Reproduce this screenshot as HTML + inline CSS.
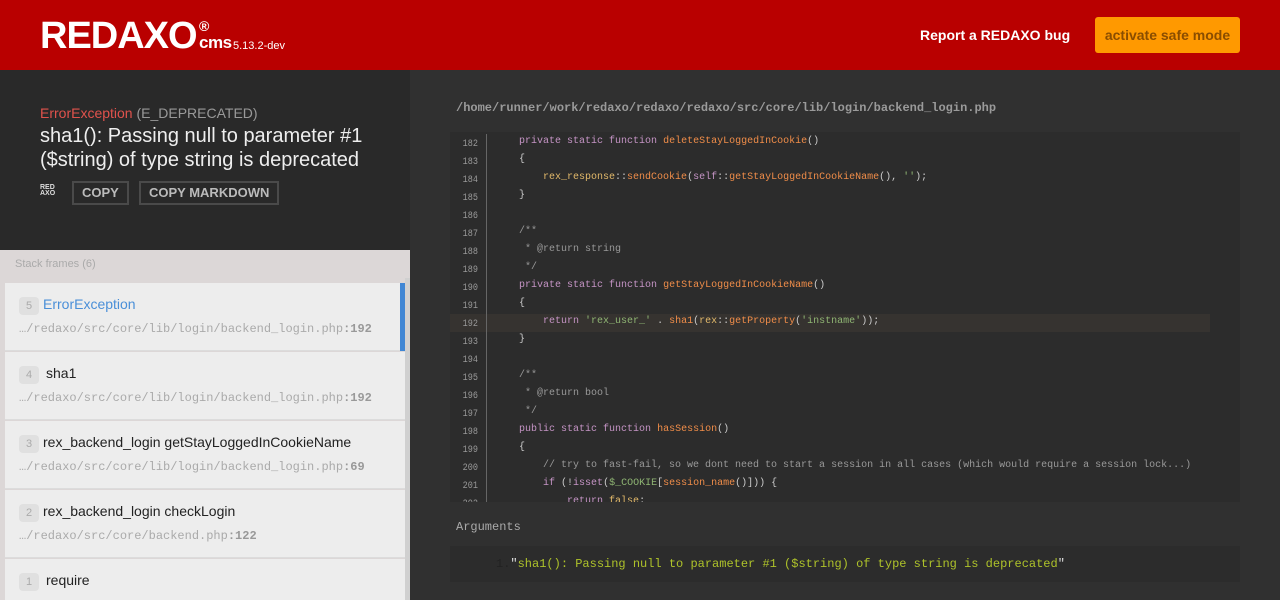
<!DOCTYPE html>
<html><head><meta charset="utf-8"><style>
*{margin:0;padding:0;box-sizing:border-box}
html{width:1280px;height:600px;overflow:hidden}
body{width:1280px;height:600px;overflow:hidden;background:#303030;font-family:"Liberation Sans",sans-serif;position:relative}
.hdr{position:absolute;left:0;top:0;width:1280px;height:70px;background:#b90000}
.logo{position:absolute;left:40px;top:15px;color:#fff;font:bold 38px "Liberation Sans",sans-serif;letter-spacing:-1px}
.reg{position:absolute;left:199px;top:18px;color:#fff;font:bold 14px "Liberation Sans"}
.cms{position:absolute;left:199px;top:33px;color:#fff;font:bold 17px "Liberation Sans";letter-spacing:-0.5px}
.ver{position:absolute;left:233px;top:40px;color:#fff;font:11px "Liberation Sans"}
.bug{position:absolute;left:920px;top:27px;color:#fff;font:bold 14px "Liberation Sans"}
.safe{position:absolute;left:1095px;top:17px;width:145px;height:36px;background:#ff9900;border-radius:3px;color:#8a4d00;font:bold 14px "Liberation Sans";text-align:center;line-height:36px}
.left{position:absolute;left:0;top:70px;width:410px;height:180px;background:#292929}
.etype{position:absolute;left:40px;top:105px;font-size:14px;color:#999}
.etype b{font-weight:normal;color:#e0524c}
.emsg{position:absolute;left:40px;top:124px;width:360px;font-size:20px;line-height:24px;color:#eee}
.mini{position:absolute;left:40px;top:185px;color:#ddd;font:900 7px/6px "Liberation Sans"}
.btn{position:absolute;top:181px;height:24px;border:2px solid #4a4a4a;color:#bbb;font:bold 13px/20px "Liberation Sans";padding:0 8px}
.stackhd{position:absolute;left:0;top:250px;width:410px;height:350px;background:#dcd7d7;overflow:hidden}
.stackhd span{position:absolute;left:15px;top:8px;font-size:11px;color:#aaa}
.sb{position:absolute;left:405px;top:28px;width:5px;height:322px;background:#d0d0d0}
.fr{position:absolute;left:5px;width:400px;height:68px;background:#ededed;border-bottom:1px solid #dcdcdc}
.num{position:absolute;left:14px;top:14px;width:20px;height:18px;background:#e0e0e0;border-radius:4px;color:#aaa;font-size:11px;text-align:center;line-height:18px}
.fn{position:absolute;left:38px;top:13px;font-size:14px;color:#222}
.fp{position:absolute;left:14px;top:39px;font:12px "Liberation Mono",monospace;color:#aaa}
.fp b{color:#999}
.path{position:absolute;left:456px;top:101px;font:bold 12px "Liberation Mono",monospace;color:#9a9a9a}
.code{position:absolute;left:450px;top:132px;width:790px;height:370px;background:#2c2c2c;overflow:hidden}
.ln{position:absolute;left:0;width:28px;text-align:right;font:10px "Liberation Mono",monospace;color:#999;transform:scaleX(.85);transform-origin:right}
.bar{position:absolute;left:36px;top:2px;width:1px;height:368px;background:#666}
.cl{position:absolute;left:45px;top:1px;font:10px/18px "Liberation Mono",monospace;color:#ccc;white-space:pre}
.hl{position:absolute;left:0;top:182px;width:760px;height:18px;background:#363330}
.k{color:#c594c5}.f{color:#f08d49}.y{color:#e2b96a}.s{color:#8fb573}.c{color:#999}
.argh{position:absolute;left:456px;top:520px;font:12px "Liberation Mono",monospace;color:#aaa}
.args{position:absolute;left:450px;top:546px;width:790px;height:36px;background:#2c2c2c;font:12px/36px "Liberation Mono",monospace;color:#aec22a}
</style></head><body>
<div class="hdr">
<div class="logo">REDAXO</div><div class="reg">®</div><div class="cms">cms</div><div class="ver">5.13.2-dev</div>
<div class="bug">Report a REDAXO bug</div>
<div class="safe">activate safe mode</div>
</div>
<div class="left"></div>
<div class="etype"><b>ErrorException</b> (E_DEPRECATED)</div>
<div class="emsg">sha1(): Passing null to parameter #1 ($string) of type string is deprecated</div>
<div class="mini">RED<br>AXO</div>
<div class="btn" style="left:72px">COPY</div>
<div class="btn" style="left:139px">COPY MARKDOWN</div>
<div class="stackhd"><span>Stack frames (6)</span><div class="sb"></div>
<div class="fr" style="top:33px"><div class="num">5</div><div class="fn" style="color:#4a8fd8">ErrorException</div><div class="fp">…/redaxo/src/core/lib/login/backend_login.php<b>:192</b></div><div style="position:absolute;right:0;top:0;width:5px;height:68px;background:#3f86d4"></div></div>
<div class="fr" style="top:102px"><div class="num">4</div><div class="fn" style="left:41px">sha1</div><div class="fp">…/redaxo/src/core/lib/login/backend_login.php<b>:192</b></div></div>
<div class="fr" style="top:171px"><div class="num">3</div><div class="fn">rex_backend_login getStayLoggedInCookieName</div><div class="fp">…/redaxo/src/core/lib/login/backend_login.php<b>:69</b></div></div>
<div class="fr" style="top:240px"><div class="num">2</div><div class="fn">rex_backend_login checkLogin</div><div class="fp">…/redaxo/src/core/backend.php<b>:122</b></div></div>
<div class="fr" style="top:309px"><div class="num">1</div><div class="fn" style="left:41px">require</div></div>
</div>
<div class="path">/home/runner/work/redaxo/redaxo/redaxo/src/core/lib/login/backend_login.php</div>
<div class="code">
<div class="hl"></div>
<div class="bar"></div>
<div class="ln" style="top:7px">182</div><div class="ln" style="top:25px">183</div><div class="ln" style="top:43px">184</div><div class="ln" style="top:61px">185</div><div class="ln" style="top:79px">186</div><div class="ln" style="top:97px">187</div><div class="ln" style="top:115px">188</div><div class="ln" style="top:133px">189</div><div class="ln" style="top:151px">190</div><div class="ln" style="top:169px">191</div><div class="ln" style="top:187px">192</div><div class="ln" style="top:205px">193</div><div class="ln" style="top:223px">194</div><div class="ln" style="top:241px">195</div><div class="ln" style="top:259px">196</div><div class="ln" style="top:277px">197</div><div class="ln" style="top:295px">198</div><div class="ln" style="top:313px">199</div><div class="ln" style="top:331px">200</div><div class="ln" style="top:349px">201</div><div class="ln" style="top:367px">202</div>
<div class="cl">    <span class="k">private static function</span> <span class="f">deleteStayLoggedInCookie</span>()
    {
        <span class="y">rex_response</span>::<span class="f">sendCookie</span>(<span class="k">self</span>::<span class="f">getStayLoggedInCookieName</span>(), <span class="s">''</span>);
    }

    <span class="c">/**
     * @return string
     */</span>
    <span class="k">private static function</span> <span class="f">getStayLoggedInCookieName</span>()
    {
        <span class="k">return</span> <span class="s">'rex_user_'</span> . <span class="f">sha1</span>(<span class="y">rex</span>::<span class="f">getProperty</span>(<span class="s">'instname'</span>));
    }

    <span class="c">/**
     * @return bool
     */</span>
    <span class="k">public static function</span> <span class="f">hasSession</span>()
    {
        <span class="c">// try to fast-fail, so we dont need to start a session in all cases (which would require a session lock...)</span>
        <span class="k">if</span> (!<span class="k">isset</span>(<span class="s">$_COOKIE</span>[<span class="f">session_name</span>()])) {
            <span class="k">return</span> <span class="y">false</span>;</div>
</div>
<div class="argh">Arguments</div>
<div class="args"><span style="color:#222;margin-left:46px">1.</span><span style="color:#ddd">"</span>sha1(): Passing null to parameter #1 ($string) of type string is deprecated<span style="color:#ddd">"</span></div>
</body></html>
